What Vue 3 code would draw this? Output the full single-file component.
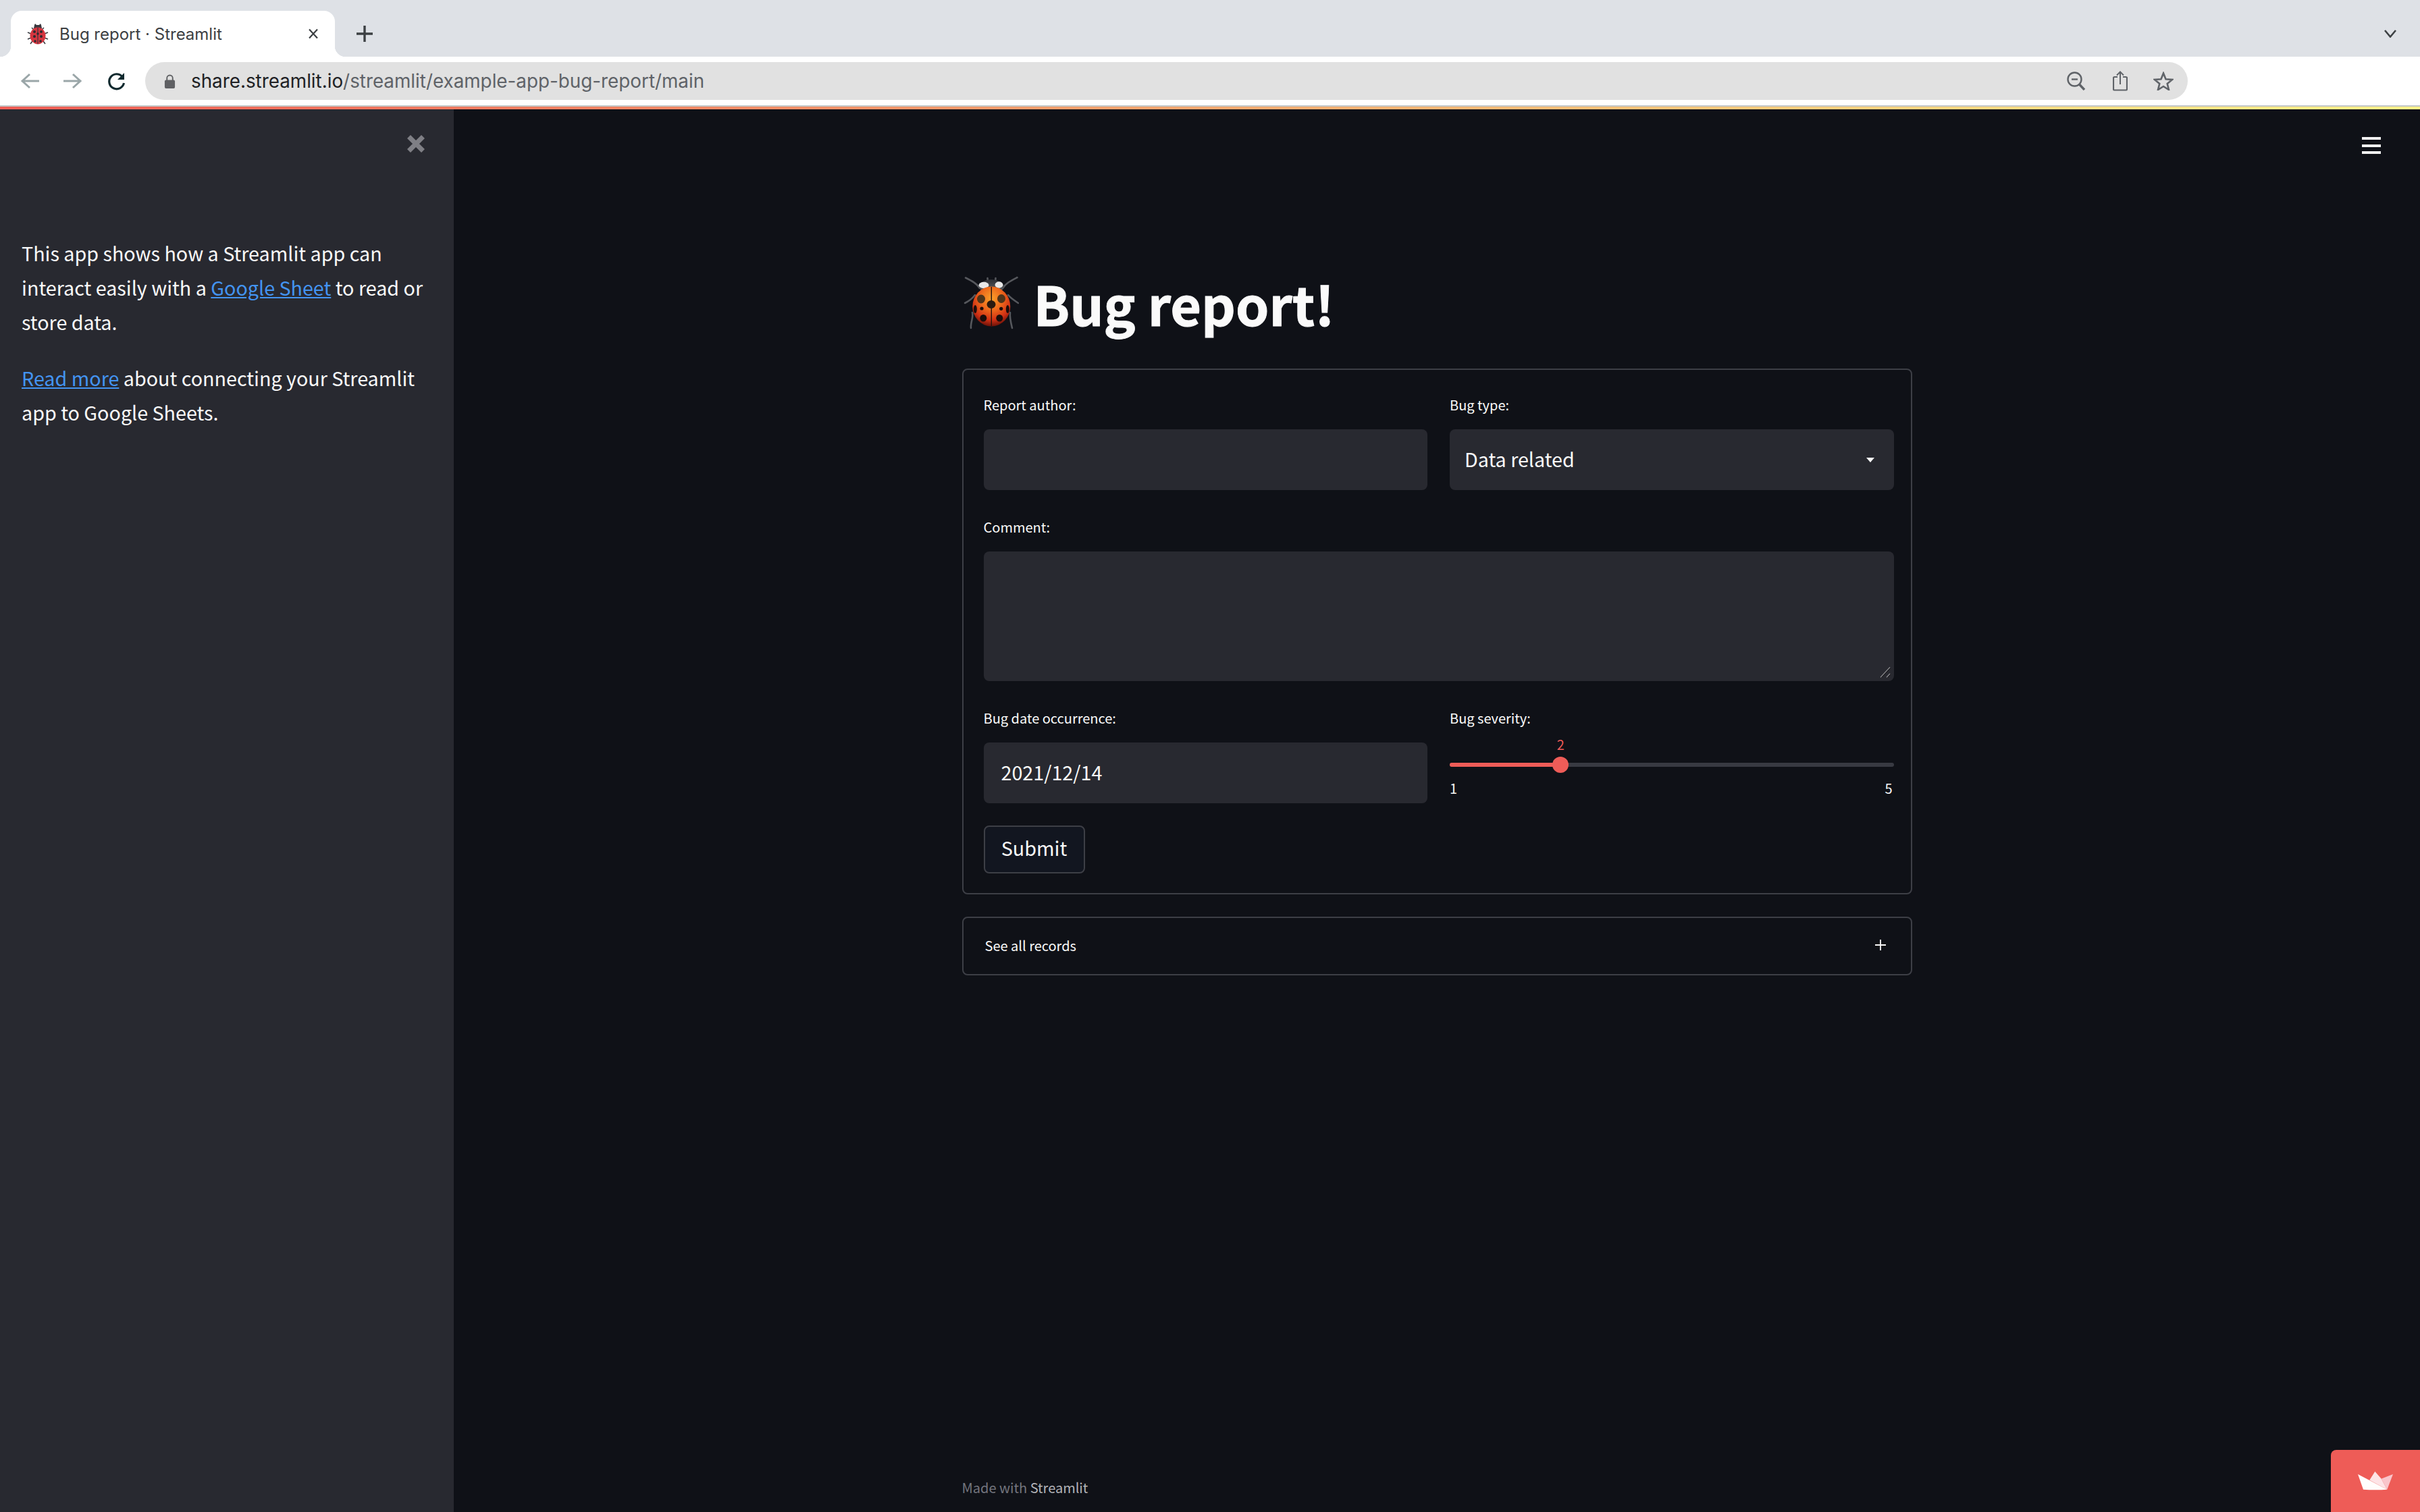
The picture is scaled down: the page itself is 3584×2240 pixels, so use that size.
<script setup>
const severity = { min: 1, max: 5, value: 2 }
const percent = ((severity.value - severity.min) / (severity.max - severity.min)) * 100
const position = { left: percent + '%' }
</script>

<template>
  <div class="window">
    <header class="tabstrip">
      <div class="tab">
        <svg class="favicon" viewBox="0 0 32 32">
          <g stroke="#3a3a40" stroke-width="1.6" fill="none">
            <path d="M7 7 11 11M25 7 21 11M1 14 6 16M31 14 26 16M1 24 6 22M31 24 26 22M5 31 8 27M27 31 24 27" />
          </g>
          <path d="M11 3 12 1 14 3H18L20 1 21 3 22 8H10Z" fill="#3a3a40" />
          <ellipse cx="16" cy="19" rx="11.5" ry="12.5" fill="#d5353f" />
          <path d="M16 7V31" stroke="#3a3a40" stroke-width="1.2" />
          <g fill="#2e2a30">
            <circle cx="11" cy="13" r="2" /><circle cx="21" cy="13" r="2" />
            <circle cx="11" cy="20" r="2" /><circle cx="21" cy="20" r="2" />
            <circle cx="16" cy="16" r="1.8" /><circle cx="12" cy="27" r="1.8" /><circle cx="20" cy="27" r="1.8" />
          </g>
        </svg>
        <span class="tab-title">Bug report · Streamlit</span>
        <svg class="tab-close" viewBox="0 0 16 16">
          <path d="M2 1.5 14 14.5M14 1.5 2 14.5" stroke="#3c4043" stroke-width="2.2" fill="none" />
        </svg>
      </div>
      <svg class="new-tab" viewBox="0 0 24 24">
        <path d="M12 0V24M0 12H24" stroke="#3c4043" stroke-width="3.4" fill="none" />
      </svg>
      <svg class="tab-menu" viewBox="0 0 18 12">
        <path d="M1 1 9 10.5 17 1" stroke="#3c4043" stroke-width="2.6" fill="none" />
      </svg>
    </header>

    <nav class="toolbar">
      <svg class="nav-icon" viewBox="0 0 32 32">
        <path d="M16 6 5 16 16 26M5 16H30" stroke="#9aa6a8" stroke-width="3" fill="none" />
      </svg>
      <svg class="nav-icon" viewBox="0 0 32 32">
        <path d="M16 6 27 16 16 26M27 16H2" stroke="#9aa6a8" stroke-width="3" fill="none" />
      </svg>
      <svg class="nav-icon" viewBox="0 0 32 32">
        <path d="M25 9.5A11 11 0 1 0 27.5 19" stroke="#10292e" stroke-width="3.2" fill="none" />
        <path d="M28 4V14H18Z" fill="#10292e" />
      </svg>
      <div class="omnibox">
        <svg class="lock" viewBox="0 0 18 22">
          <path d="M4.5 10V6a4.5 4.5 0 0 1 9 0v4" stroke="#5f6063" stroke-width="2" fill="none" />
          <rect x="1" y="9" width="16" height="13" rx="2" fill="#5f6063" />
        </svg>
        <span class="url"><span class="url-host">share.streamlit.io</span>/streamlit/example-app-bug-report/main</span>
        <div class="omni-actions">
          <svg class="omni-zoom" viewBox="0 0 28 28">
            <circle cx="11.5" cy="11.5" r="10" stroke="#5f6368" stroke-width="2.4" fill="none" />
            <path d="M7 11.5H16" stroke="#5f6368" stroke-width="2.4" />
            <path d="M18.5 19 26 27" stroke="#5f6368" stroke-width="3.4" />
          </svg>
          <svg class="omni-share" viewBox="0 0 22 30">
            <path d="M7 9H2.5A1.5 1.5 0 0 0 1 10.500V27a1.500 1.500 0 0 0 1.500 1.500H19.500A1.500 1.500 0 0 0 21 27V10.500A1.500 1.500 0 0 0 19.500 9H15" stroke="#5f6368" stroke-width="2.200" fill="none" />
            <path d="M11 20V2M6 6.500 11 1.500 16 6.500" stroke="#5f6368" stroke-width="2" fill="none" />
          </svg>
          <svg class="omni-star" viewBox="0 0 30 28">
            <path d="M15 2.500 18.500 11.300 28 12 20.700 17.900 23 27 15 22 7 27 9.300 17.900 2 12 11.500 11.300Z" stroke="#5f6368" stroke-width="2.600" fill="none" />
          </svg>
        </div>
      </div>
    </nav>
    <div class="separator"></div>
    <div class="rainbow"></div>

    <div class="app">
      <aside class="sidebar">
        <div class="sidebar-head">
          <svg class="sidebar-close" viewBox="0 0 28 28">
            <path d="M3.500 3.500 24.500 24.500M24.500 3.500 3.500 24.500" stroke="#7f7f85" stroke-width="7" fill="none" />
          </svg>
        </div>
        <div class="sidebar-body">
          <p>This app shows how a Streamlit app can interact easily with a <a href="#">Google Sheet</a> to read or store data.</p>
          <p><a href="#">Read more</a> about connecting your Streamlit app to Google Sheets.</p>
        </div>
      </aside>

      <main class="main">
        <div class="main-head">
          <div class="hamburger"><i></i><i></i><i></i></div>
        </div>

        <div class="content">
          <h1 class="title">
            <svg class="ladybug" viewBox="0 0 82 82">
              <defs>
                <radialGradient id="shell" cx="50%" cy="30%" r="72%">
                  <stop offset="0" stop-color="#f9a02a" />
                  <stop offset="0.4" stop-color="#ee6a1c" />
                  <stop offset="0.75" stop-color="#cf2f14" />
                  <stop offset="1" stop-color="#5f0f08" />
                </radialGradient>
                <linearGradient id="headfill" x1="0" y1="0" x2="0" y2="1">
                  <stop offset="0" stop-color="#2c2e33" />
                  <stop offset="1" stop-color="#5f6165" />
                </linearGradient>
              </defs>
              <g stroke="#56585d" stroke-width="2.600" fill="none" stroke-linecap="round">
                <path d="M24 19C20 12 12 8 3 3.500" />
                <path d="M58 19C62 12 70 8 79.500 3" />
                <path d="M36 10 35.500 4M47 10 47.500 4" />
                <path d="M17 29C14 33 8 38 2 41" />
                <path d="M66 29C69 33 75 37 81 41" />
                <path d="M13 55C15 62 10 70 11 78" />
                <path d="M69 55C68 62 70 70 72 78" />
              </g>
              <path d="M23 17C25 10 32 6 41 6S57 10 60 17L56 24H27Z" fill="url(#headfill)" />
              <ellipse cx="30" cy="14.500" rx="7.500" ry="4.700" fill="#e8e8e8" />
              <ellipse cx="52.500" cy="14" rx="6" ry="4.700" fill="#e8e8e8" />
              <ellipse cx="41.300" cy="46" rx="28" ry="29.500" fill="url(#shell)" />
              <path d="M41.300 17V75" stroke="#1f1210" stroke-width="1.400" />
              <ellipse cx="26" cy="35" rx="6" ry="6.500" fill="#4f351a" />
              <ellipse cx="56" cy="34.500" rx="6" ry="6.500" fill="#4f351a" />
              <ellipse cx="41" cy="43" rx="6.500" ry="6" fill="#2a1a10" />
              <ellipse cx="17.300" cy="50" rx="2.500" ry="6" fill="#1b0d0b" />
              <ellipse cx="65.300" cy="50" rx="2.500" ry="6" fill="#1b0d0b" />
              <circle cx="27" cy="49" r="2.600" fill="#1b0d0b" />
              <circle cx="55.700" cy="49.300" r="2.600" fill="#1b0d0b" />
              <ellipse cx="29.300" cy="63.300" rx="5" ry="5.200" fill="#1b0d0b" />
              <ellipse cx="53.300" cy="63.300" rx="5" ry="5.200" fill="#1b0d0b" />
            </svg>
            <span>Bug report!</span>
          </h1>

          <form class="form" @submit.prevent>
            <div class="field">
              <label class="label">Report author:</label>
              <input class="control" type="text" />
            </div>
            <div class="field">
              <label class="label">Bug type:</label>
              <div class="control select">
                <span>Data related</span>
                <svg class="caret" viewBox="0 0 12 7"><path d="M0 0H12L6 7Z" fill="#fafafa" /></svg>
              </div>
            </div>
            <div class="field wide">
              <label class="label">Comment:</label>
              <div class="area-box">
                <textarea class="control area"></textarea>
                <svg class="grip" viewBox="0 0 16 16">
                  <path d="M1 15.500 15 .5M10 15.500 15 10" stroke="#8b8b8f" stroke-width="1.300" fill="none" />
                  <path d="M2.500 15.500 15.500 2M11.500 15.500 15.500 11.500" stroke="#111" stroke-width="1" fill="none" />
                </svg>
              </div>
            </div>
            <div class="field">
              <label class="label">Bug date occurrence:</label>
              <input class="control date" type="text" value="2021/12/14" />
            </div>
            <div class="field">
              <label class="label">Bug severity:</label>
              <div class="slider">
                <div class="track">
                  <div class="fill" :style="{ width: position.left }"></div>
                  <div class="thumb" :style="position">
                    <span class="thumb-value">{{ severity.value }}</span>
                  </div>
                </div>
                <div class="ends"><span>{{ severity.min }}</span><span>{{ severity.max }}</span></div>
              </div>
            </div>
            <div class="wide">
              <button class="submit" type="submit">Submit</button>
            </div>
          </form>

          <div class="expander">
            <span>See all records</span>
            <svg class="plus" viewBox="0 0 16 16"><path d="M8 0V16M0 8H16" stroke="#fafafa" stroke-width="1.800" fill="none" /></svg>
          </div>
        </div>

        <footer class="footer">Made with <span>Streamlit</span></footer>
      </main>
    </div>

    <div class="badge">
      <svg class="crown" viewBox="0 0 52 28">
        <path d="M17.300 12.700 25.300 0 34.700 10.700 43.300 26.700Z" fill="#fde3e6" />
        <path d="M34.700 10.700 52 4 43.300 26.700Z" fill="#f9c5cb" />
        <path d="M0 4 43.300 26.700Q26 28 8 26.700Z" fill="#fffdfc" />
      </svg>
    </div>
  </div>
</template>

<style>
html, body { margin: 0; background: #0f1117; overflow: hidden; }
</style>

<style scoped>
.window {
  position: relative;
  width: 3584px;
  height: 2240px;
  display: flex;
  flex-direction: column;
  overflow: hidden;
  font-family: "Noto Sans CJK SC", "Noto Sans", sans-serif;
  color: #fafafa;
}

/* browser chrome */
.tabstrip {
  height: 84px;
  box-sizing: border-box;
  padding: 16px 0 0 16px;
  background: #dee1e6;
  display: flex;
  align-items: flex-start;
  flex: none;
}
.tab {
  position: relative;
  width: 480px;
  height: 68px;
  box-sizing: border-box;
  padding: 0 24px 0 24px;
  background: #fff;
  border-radius: 16px 16px 0 0;
  display: flex;
  align-items: center;
  font-family: "Inter", "Liberation Sans", sans-serif;
  font-size: 24px;
  color: #3c4043;
}
.tab::before, .tab::after {
  content: "";
  position: absolute;
  bottom: 0;
  width: 16px;
  height: 16px;
}
.tab::before { left: -16px; background: radial-gradient(circle at 0 0, transparent 16px, #fff 16.5px); }
.tab::after { right: -16px; background: radial-gradient(circle at 100% 0, transparent 16px, #fff 16.5px); }
.favicon { width: 32px; height: 32px; flex: none; }
.tab-title { margin-left: 16px; flex: 1; white-space: nowrap; }
.tab-close { width: 16px; height: 16px; flex: none; }
.new-tab { width: 24px; height: 24px; margin: 22px 0 0 32px; flex: none; }
.tab-menu { width: 18px; height: 12px; margin: 28px 35px 0 auto; flex: none; }

.toolbar {
  height: 72px;
  box-sizing: border-box;
  background: #fff;
  padding: 8px 344px 8px 28px;
  display: flex;
  align-items: center;
  gap: 32px;
  flex: none;
}
.nav-icon { width: 32px; height: 32px; flex: none; }
.omnibox {
  flex: 1;
  height: 56px;
  margin-left: -5px;
  box-sizing: border-box;
  padding: 0 21px 0 28px;
  border-radius: 28px;
  background: #e1e1e1;
  display: flex;
  align-items: center;
  font-family: "Inter", "Liberation Sans", sans-serif;
  font-size: 27.800px;
  color: #5f6368;
}
.lock { width: 17px; height: 21px; flex: none; }
.url { margin-left: 23px; white-space: nowrap; }
.url-host { color: #202124; }
.omni-actions { margin-left: auto; display: flex; align-items: center; gap: 38px; }
.omni-zoom { width: 28px; height: 28px; margin-right: 2px; }
.omni-share { width: 22px; height: 30px; }
.omni-star { width: 30px; height: 28px; }

.separator { height: 2px; background: #c2c6c6; flex: none; }
.rainbow {
  height: 4px;
  flex: none;
  background: linear-gradient(90deg, #ee5d55, #fef48a);
}

/* app */
.app { flex: 1; display: flex; min-height: 0; background: #0f1117; }

.sidebar {
  width: 672px;
  flex: none;
  background: #282930;
  box-sizing: border-box;
  display: flex;
  flex-direction: column;
}
.sidebar-head {
  display: flex;
  justify-content: flex-end;
  padding: 37px 42px 0 0;
}
.sidebar-close { width: 28px; height: 28px; }
.sidebar-body {
  padding: 122px 32px 0;
  font-size: 28.700px;
  line-height: 51px;
}
.sidebar-body p { margin: 0 0 32px; }
.sidebar-body a { color: #4394f2; text-decoration: underline; }

.main { flex: 1; display: flex; flex-direction: column; min-width: 0; }
.main-head { display: flex; justify-content: flex-end; padding: 41px 58px 0 0; }
.hamburger {
  width: 28px;
  display: flex;
  flex-direction: column;
  gap: 6.500px;
}
.hamburger i { display: block; height: 4px; background: #f4f4f4; }

.content {
  width: 1407px;
  margin: 0 auto;
  padding-top: 168px;
  display: flex;
  flex-direction: column;
}
.title {
  margin: 0 0 44px;
  height: 106px;
  display: flex;
  align-items: center;
  gap: 22px;
  font-size: 79px;
  font-weight: 700;
  line-height: 106px;
  white-space: nowrap;
  -webkit-text-stroke: 1px #fafafa;
}
.ladybug { width: 82px; height: 82px; margin-left: 2px; flex: none; }

.form {
  box-sizing: border-box;
  height: 779px;
  border: 2px solid #3d3f46;
  border-radius: 8px;
  padding: 30px 25px 30px 30px;
  display: grid;
  grid-template-columns: 1fr 1fr;
  column-gap: 33px;
  row-gap: 33px;
  align-content: start;
}
.wide { grid-column: 1 / -1; }
.label {
  display: block;
  font-size: 20px;
  line-height: 44px;
  height: 44px;
  margin-bottom: 14px;
}
.control {
  display: block;
  width: 100%;
  height: 90px;
  box-sizing: border-box;
  border: 0;
  outline: 0;
  border-radius: 8px;
  background: #282930;
  color: #fafafa;
  font-family: inherit;
  font-size: 28.700px;
  padding: 0 26px 3px;
}
.select {
  display: flex;
  align-items: center;
  justify-content: space-between;
  padding: 0 29px 3px 22px;
}
.caret { width: 12px; height: 7px; margin-top: 3px; }
.area-box { position: relative; height: 192px; }
.area { height: 192px; padding: 20px 27px; resize: none; }
.grip {
  position: absolute;
  right: 5px;
  bottom: 5px;
  width: 16px;
  height: 16px;
}

.slider { height: 90px; padding-top: 30px; box-sizing: border-box; }
.track {
  position: relative;
  height: 6px;
  border-radius: 3px;
  background: #383a42;
}
.fill { height: 100%; border-radius: 3px 0 0 3px; background: #ee5c58; }
.thumb {
  position: absolute;
  top: -9px;
  width: 24px;
  height: 24px;
  margin-left: -12px;
  border-radius: 50%;
  background: #ee5c58;
}
.thumb-value {
  position: absolute;
  left: 50%;
  bottom: 26px;
  transform: translateX(-50%);
  font-size: 20px;
  line-height: 32px;
  color: #ee5c58;
}
.ends {
  display: flex;
  justify-content: space-between;
  margin-top: 16px;
  font-size: 20px;
  line-height: 32px;
  padding-right: 2px;
}

.submit {
  display: block;
  width: 150px;
  height: 71px;
  box-sizing: border-box;
  padding: 0 0 7px;
  border: 2px solid #3d3f46;
  border-radius: 8px;
  background: #121620;
  color: #fafafa;
  font-family: inherit;
  font-size: 28.700px;
}

.expander {
  box-sizing: border-box;
  height: 87px;
  margin-top: 33px;
  border: 2px solid #3d3f46;
  border-radius: 8px;
  padding: 0 37px 3px 32px;
  display: flex;
  align-items: center;
  justify-content: space-between;
  font-size: 20px;
}
.plus { width: 16px; height: 16px; }

.footer {
  width: 1407px;
  margin: auto auto 0;
  padding-bottom: 21px;
  font-size: 20px;
  line-height: 30px;
  color: #73757e;
}
.footer span { color: #b2b3b8; }

.badge {
  position: absolute;
  right: 0;
  bottom: 0;
  width: 132px;
  height: 92px;
  border-radius: 8px 0 0 0;
  background: #ee5c57;
  display: flex;
  align-items: center;
  justify-content: center;
}
.crown { width: 52px; height: 28px; }
</style>
